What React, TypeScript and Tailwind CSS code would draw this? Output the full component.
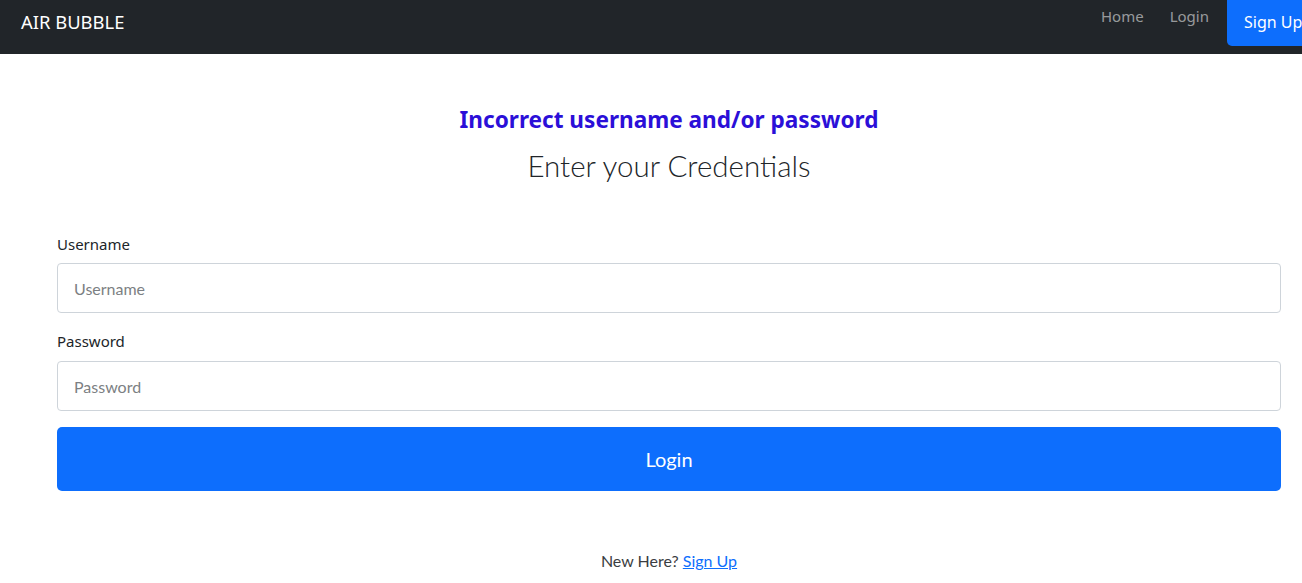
import React from "react";

export default function App() {
  return (
    <div className="min-h-[583px] bg-white">
      <nav className="flex h-[54px] items-start justify-between bg-[#212529] font-['Noto_Sans','Open_Sans',sans-serif]">
        <div className="pl-[21px] pt-[9px] text-[18.4px] leading-[26px] text-white">AIR BUBBLE</div>
        <div className="flex items-start">
          <a className="mt-[4px] px-[13px] text-[15px] leading-[24px] text-[#ffffff8c]">Home</a>
          <a className="mt-[4px] px-[13px] text-[15px] leading-[24px] text-[#ffffff8c]">Login</a>
          <a className="ml-[5px] flex h-[46px] w-[75px] items-center overflow-hidden whitespace-nowrap rounded-bl-[5px] bg-[#0d6efd] pb-[2px] pl-[17px] text-[16px] text-white">
            Sign Up
          </a>
        </div>
      </nav>
      <main className="ml-[57px] mr-[21px] flex flex-col">
        <h2 className="mt-[51px] text-center font-['Noto_Sans',sans-serif] text-[22.6px] font-bold leading-[30px] text-[#2b0fd8]">
          Incorrect username and/or password
        </h2>
        <h3 className="mt-[14px] text-center font-['Lato',sans-serif] text-[29.5px] font-light leading-[34px] text-[#212529]">
          Enter your Credentials
        </h3>
        <label className="mt-[50px] font-['Noto_Sans',sans-serif] text-[15px] leading-[22px] text-[#212529]">
          Username
        </label>
        <input
          className="mt-[8px] h-[50px] rounded-[4px] border border-[#ced4da] px-[16px] font-['Lato',sans-serif] text-[16px] outline-none placeholder:text-[#7c7f83]"
          placeholder="Username"
        />
        <label className="mt-[17px] font-['Noto_Sans',sans-serif] text-[15px] leading-[22px] text-[#212529]">
          Password
        </label>
        <input
          className="mt-[9px] h-[50px] rounded-[4px] border border-[#ced4da] px-[16px] font-['Lato',sans-serif] text-[16px] outline-none placeholder:text-[#7c7f83]"
          placeholder="Password"
        />
        <button className="mt-[16px] h-[64px] rounded-[5px] bg-[#0d6efd] font-['Lato',sans-serif] text-[20px] text-white">
          Login
        </button>
        <p className="mt-[59px] text-center font-['Lato',sans-serif] text-[16px] leading-[22px] text-[#3a3d41]">
          New Here? <a className="text-[#0d6efd] underline">Sign Up</a>
        </p>
      </main>
    </div>
  );
}
